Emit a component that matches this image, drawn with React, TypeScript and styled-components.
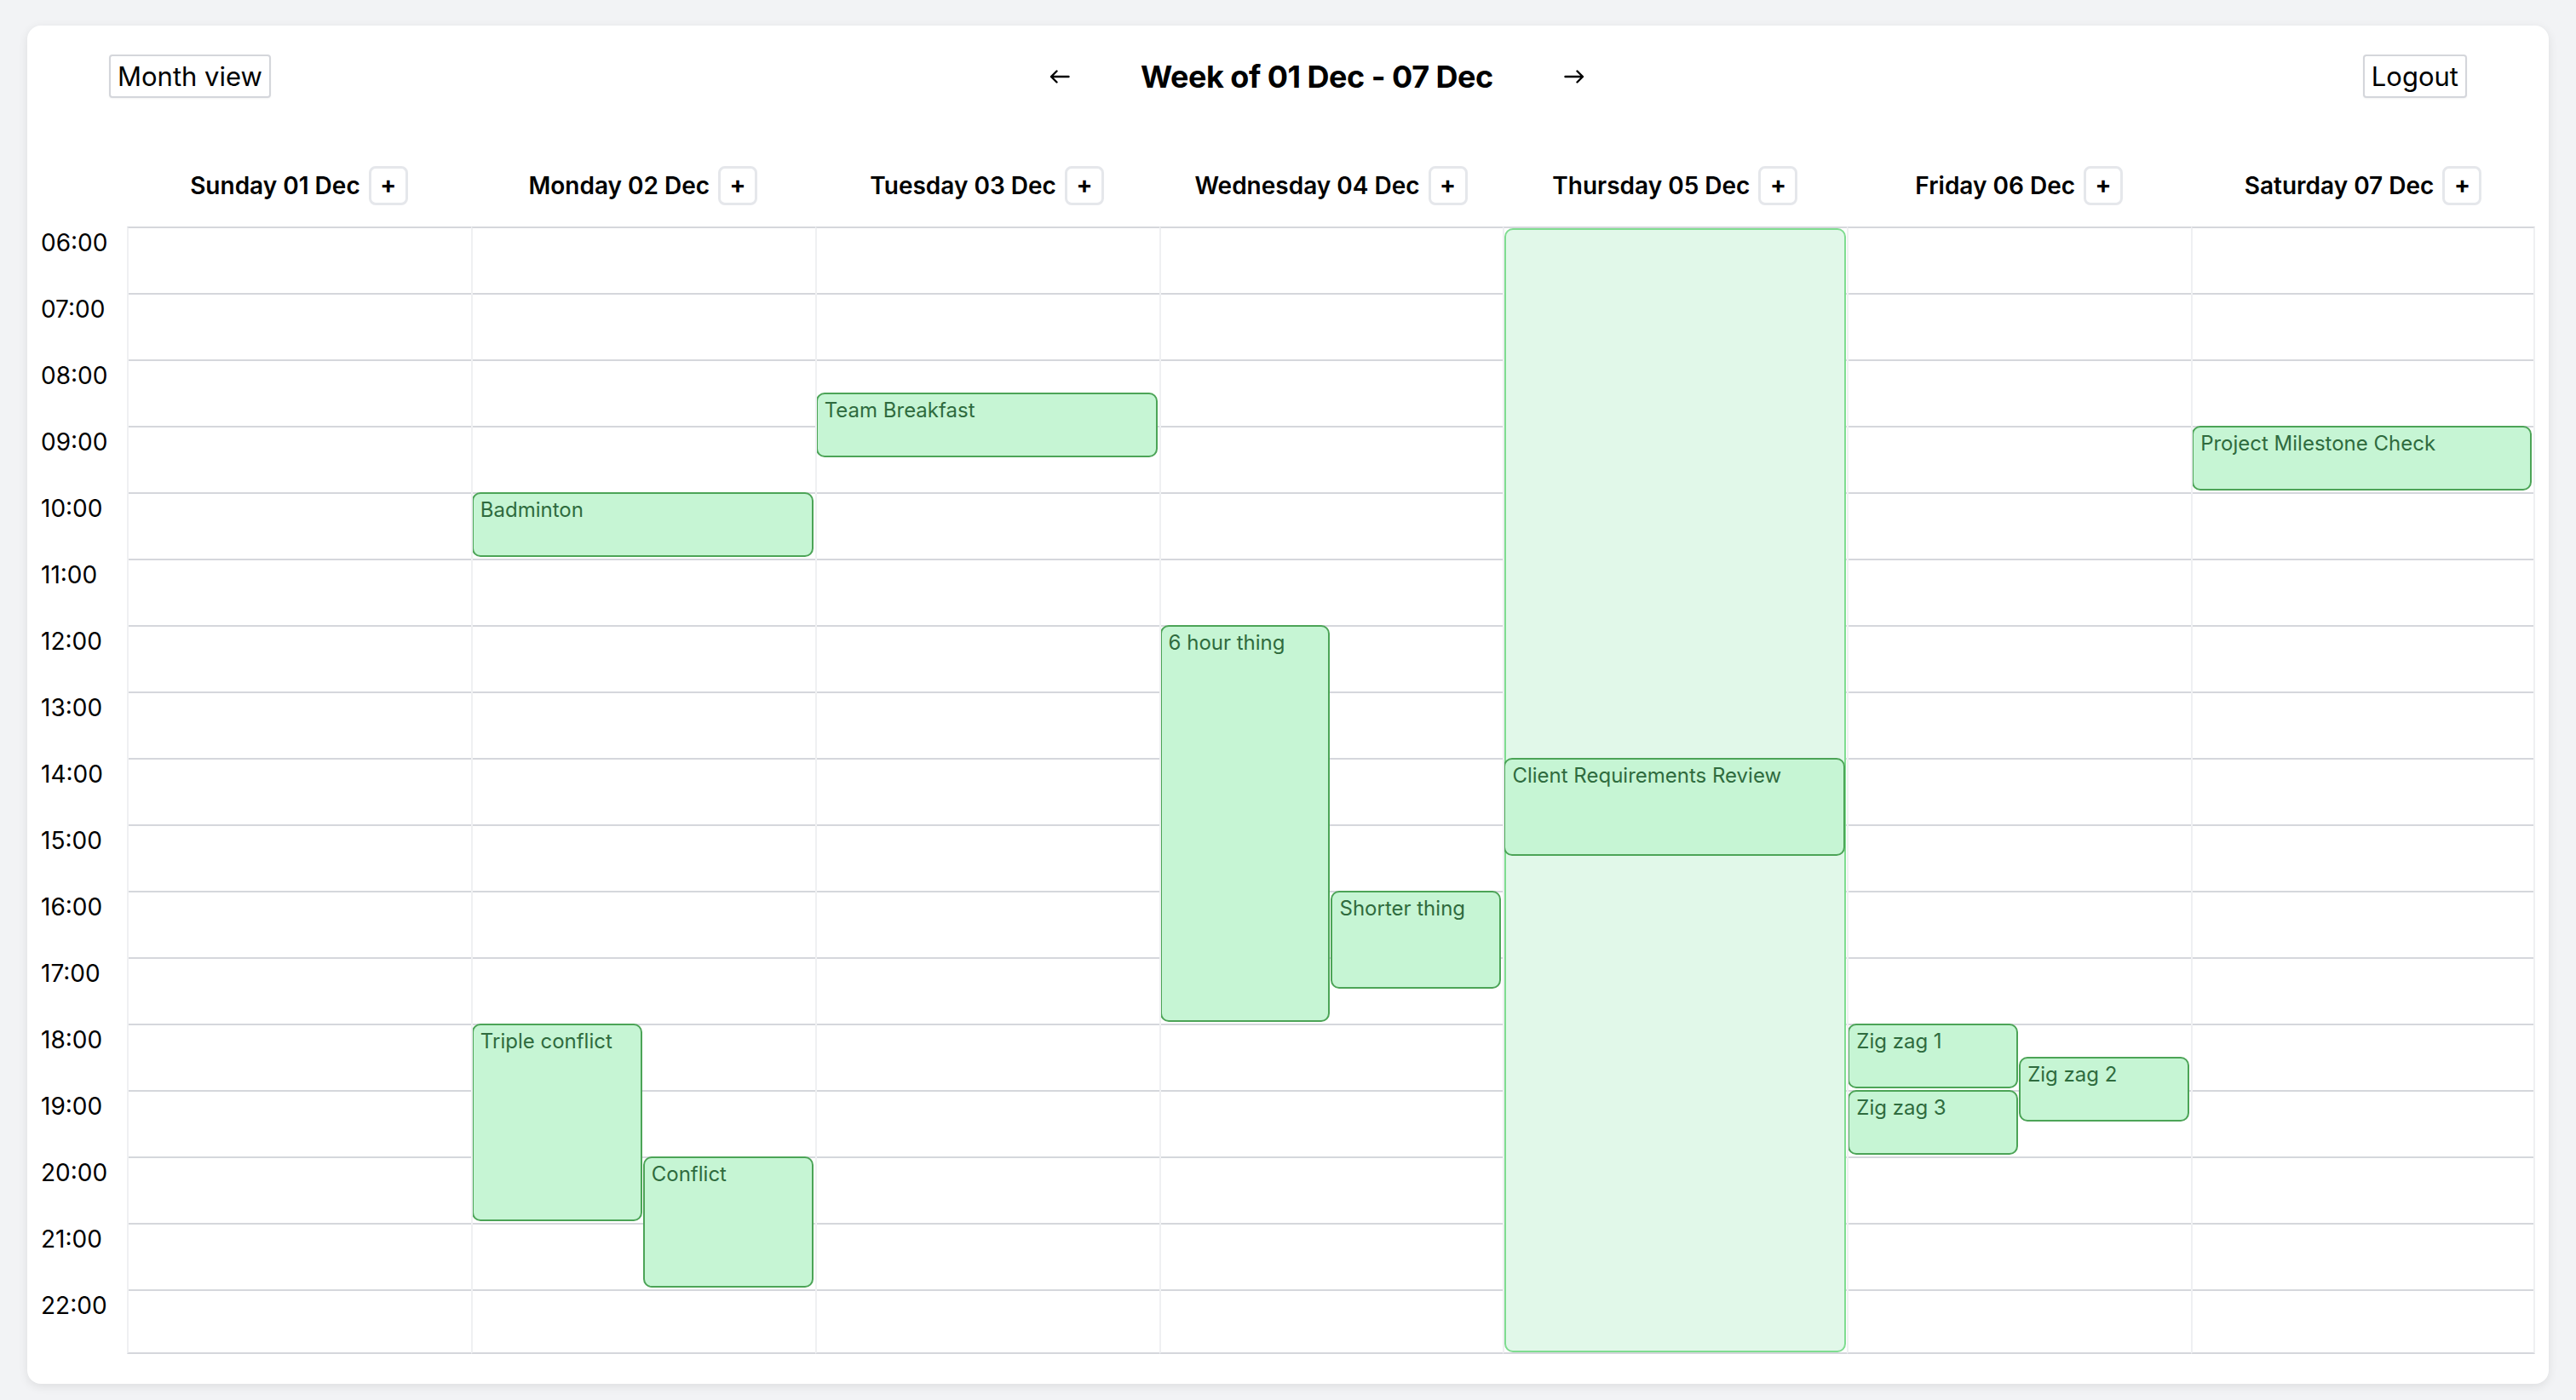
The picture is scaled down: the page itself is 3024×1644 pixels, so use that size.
import React from "react";
import styled, { createGlobalStyle } from "styled-components";

const HOUR = 78;
const START = 6;
const HOURS = Array.from({ length: 17 }, (_, i) => START + i);

const GlobalStyle = createGlobalStyle`
  html, body { margin: 0; padding: 0; background: #f2f3f5; }
  body { font-family: Inter, "Noto Sans", "Liberation Sans", sans-serif; color: #000; }
  *, *::before, *::after { box-sizing: border-box; }
`;

const Page = styled.div`
  padding: 30px 32px 16px;
`;

const Card = styled.div`
  background: #fff;
  border-radius: 16px;
  box-shadow: 0 3px 12px rgba(0, 0, 0, 0.09);
  padding: 34px 16px 31px;
`;

const Header = styled.header`
  display: flex;
  justify-content: space-between;
  align-items: center;
  height: 51px;
  padding: 0 80px;
`;

const PlainButton = styled.button`
  font-family: inherit;
  font-size: 31px;
  line-height: 39px;
  color: #000;
  background: #fff;
  border: 2px solid #d4d6db;
  border-radius: 4px;
  padding: 4px 8px;
  box-shadow: 0 1px 2px rgba(0, 0, 0, 0.05);
  cursor: pointer;
`;

const WeekNav = styled.div`
  display: flex;
  align-items: center;
  gap: 83px;
`;

const ArrowButton = styled.button`
  background: none;
  border: none;
  padding: 0;
  width: 24px;
  height: 18px;
  display: flex;
  align-items: center;
  justify-content: center;
  cursor: pointer;
`;

const Title = styled.h1`
  margin: 0;
  font-size: 36px;
  font-weight: 700;
  letter-spacing: -0.5px;
  line-height: 44px;
`;

const DayRow = styled.div`
  display: grid;
  grid-template-columns: 101px repeat(7, 1fr);
  height: 46px;
  margin: 80px 0 25px;
`;

const DayHead = styled.div`
  display: flex;
  align-items: center;
  justify-content: center;
  gap: 10px;
  font-size: 28px;
  font-weight: 600;
`;

const AddButton = styled.button`
  width: 46px;
  height: 46px;
  display: flex;
  align-items: center;
  justify-content: center;
  background: #fff;
  border: 3px solid #e5e7eb;
  border-radius: 8px;
  font-family: inherit;
  font-size: 28px;
  font-weight: 700;
  color: #000;
  padding: 0 0 2px;
  cursor: pointer;
`;

const Body = styled.div`
  display: grid;
  grid-template-columns: 101px repeat(7, 1fr);
`;

const TimeCol = styled.div`
  display: flex;
  flex-direction: column;
  padding-top: 2px;
`;

const TimeLabel = styled.div`
  height: ${HOUR}px;
  font-size: 28px;
  line-height: normal;
  color: #000;
`;

const DayColumn = styled.div<{ $last?: boolean }>`
  position: relative;
  height: 1324px;
  overflow: hidden;
  border-top: 2px solid #d5d7dc;
  border-bottom: 2px solid #d5d7dc;
  border-left: 2px solid #eff0f2;
  border-right: ${(p) => (p.$last ? "2px solid #eff0f2" : "none")};
`;

const HourCell = styled.div`
  height: ${HOUR}px;
  border-bottom: 2px solid #d5d7dc;
`;

const EventBox = styled.div<{ $ghost?: boolean }>`
  position: absolute;
  border-radius: 10px;
  border: 2px solid ${(p) => (p.$ghost ? "#7fdc90" : "#4ca457")};
  background: ${(p) => (p.$ghost ? "#e1f8e9" : "#c6f5d4")};
  color: #2f6b3e;
  font-size: 24px;
  line-height: normal;
  padding: 4px 8px;
  overflow: hidden;
  white-space: nowrap;
`;

type Ev = {
  title: string;
  start: number;
  end: number;
  lane?: number;
  lanes?: number;
  ghost?: boolean;
};

const DAYS: { label: string; events: Ev[] }[] = [
  { label: "Sunday 01 Dec", events: [] },
  {
    label: "Monday 02 Dec",
    events: [
      { title: "Badminton", start: 10, end: 11 },
      { title: "Triple conflict", start: 18, end: 21, lane: 0, lanes: 2 },
      { title: "Conflict", start: 20, end: 22, lane: 1, lanes: 2 },
    ],
  },
  {
    label: "Tuesday 03 Dec",
    events: [{ title: "Team Breakfast", start: 8.5, end: 9.5 }],
  },
  {
    label: "Wednesday 04 Dec",
    events: [
      { title: "6 hour thing", start: 12, end: 18, lane: 0, lanes: 2 },
      { title: "Shorter thing", start: 16, end: 17.5, lane: 1, lanes: 2 },
    ],
  },
  {
    label: "Thursday 05 Dec",
    events: [
      { title: "", start: 6, end: 23, ghost: true },
      { title: "Client Requirements Review", start: 14, end: 15.5 },
    ],
  },
  {
    label: "Friday 06 Dec",
    events: [
      { title: "Zig zag 1", start: 18, end: 19, lane: 0, lanes: 2 },
      { title: "Zig zag 2", start: 18.5, end: 19.5, lane: 1, lanes: 2 },
      { title: "Zig zag 3", start: 19, end: 20, lane: 0, lanes: 2 },
    ],
  },
  {
    label: "Saturday 07 Dec",
    events: [{ title: "Project Milestone Check", start: 9, end: 10 }],
  },
];

const pad = (h: number) => `${h < 10 ? "0" : ""}${h}:00`;

const Arrow = ({ dir }: { dir: "left" | "right" }) => (
  <svg
    width="24"
    height="16"
    viewBox="0 0 24 16"
    fill="none"
    stroke="#000"
    strokeWidth="2.4"
    strokeLinecap="round"
    strokeLinejoin="round"
    style={dir === "right" ? { transform: "scaleX(-1)" } : undefined}
  >
    <path d="M22.5 8H2M8.5 1.5L2 8l6.5 6.5" />
  </svg>
);

function eventStyle(ev: Ev): React.CSSProperties {
  if (ev.ghost) {
    return { top: 0, bottom: 0, left: "0px", width: "calc(100% - 1px)" };
  }
  const lanes = ev.lanes ?? 1;
  const lane = ev.lane ?? 0;
  return {
    top: (ev.start - START) * HOUR - 2,
    height: (ev.end - ev.start) * HOUR - 2,
    left: `calc(${(lane * 100) / lanes}% - 1px)`,
    width: `calc(${100 / lanes}% - 1px)`,
  };
}

export default function App() {
  return (
    <>
      <GlobalStyle />
      <Page>
        <Card>
          <Header>
            <PlainButton>Month view</PlainButton>
            <WeekNav>
              <ArrowButton aria-label="Previous week">
                <Arrow dir="left" />
              </ArrowButton>
              <Title>Week of 01 Dec - 07 Dec</Title>
              <ArrowButton aria-label="Next week">
                <Arrow dir="right" />
              </ArrowButton>
            </WeekNav>
            <PlainButton>Logout</PlainButton>
          </Header>

          <DayRow>
            <div />
            {DAYS.map((d) => (
              <DayHead key={d.label}>
                <span>{d.label}</span>
                <AddButton>+</AddButton>
              </DayHead>
            ))}
          </DayRow>

          <Body>
            <TimeCol>
              {HOURS.map((h) => (
                <TimeLabel key={h}>{pad(h)}</TimeLabel>
              ))}
            </TimeCol>
            {DAYS.map((d, i) => (
              <DayColumn key={d.label} $last={i === DAYS.length - 1}>
                {HOURS.map((h) => (
                  <HourCell key={h} />
                ))}
                {d.events.map((ev, j) => (
                  <EventBox key={j} $ghost={ev.ghost} style={eventStyle(ev)}>
                    {ev.title}
                  </EventBox>
                ))}
              </DayColumn>
            ))}
          </Body>
        </Card>
      </Page>
    </>
  );
}
